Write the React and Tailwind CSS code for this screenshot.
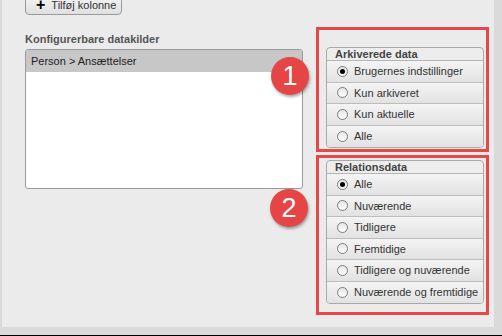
import React from 'react';

const archived = ['Brugernes indstillinger', 'Kun arkiveret', 'Kun aktuelle', 'Alle'];
const relations = ['Alle', 'Nuværende', 'Tidligere', 'Fremtidige', 'Tidligere og nuværende', 'Nuværende og fremtidige'];

function Radio({ checked }) {
  return (
    <span className="flex h-[11px] w-[11px] shrink-0 items-center justify-center rounded-full border border-[#7a7a7a] bg-gradient-to-b from-[#e6e6e6] to-white">
      {checked && <span className="h-[5px] w-[5px] rounded-full bg-black" />}
    </span>
  );
}

function Group({ title, options }) {
  return (
    <div className="overflow-hidden rounded-[4px] border border-[#a9a9a9] bg-[#ededed]">
      <div className="h-[13px] border-b border-[#b5b5b5] px-[8px] text-[11px] leading-[13px] font-bold whitespace-nowrap text-[#444]">
        {title}
      </div>
      {options.map((o, i) => (
        <div
          key={o}
          className="flex h-[21.5px] items-center gap-[6px] border-b border-[#bdbdbd] bg-gradient-to-b from-[#f4f4f4] to-[#e2e2e2] pl-[10px] text-[11px] whitespace-nowrap text-[#333] last:border-b-0"
        >
          <Radio checked={i === 0} />
          <span>{o}</span>
        </div>
      ))}
    </div>
  );
}

function Badge({ n }) {
  return (
    <div className="flex h-[38px] w-[38px] items-center justify-center rounded-full bg-[#e64545] text-[27px] leading-none text-white shadow-[1px_2px_3px_rgba(0,0,0,0.35)]">
      {n}
    </div>
  );
}

export default function App() {
  return (
    <div
      className="flex h-[336px] w-[502px] flex-col overflow-hidden bg-[#1a1a1a]"
      style={{ fontFamily: '"Liberation Sans", Arial, sans-serif' }}
    >
      <div className="flex min-h-0 flex-1 border-b border-black">
        <div className="flex flex-1 flex-col border-l-[2px] border-[#dadada] bg-[#ebebeb]">
          <div className="flex flex-1">
            <div className="flex w-[268px] shrink-0 flex-col pl-[23px]">
              <div className="-mt-[6px] flex h-[21px] w-[97px] items-end whitespace-nowrap rounded-b-[4px] border border-[#9a9a9a] bg-gradient-to-b from-[#f5f5f5] to-[#e0e0e0] pb-[2px] pl-[10px] text-[11px] text-[#333]">
                <span className="mr-[6px] text-[16px] leading-[14px] font-bold text-black">+</span>
                <span className="leading-[14px]">Tilføj kolonne</span>
              </div>
              <div className="mt-[18px] whitespace-nowrap text-[11px] leading-[13px] font-bold text-[#555]">Konfigurerbare datakilder</div>
              <div className="mt-[3px] h-[140px] w-[278px] overflow-hidden rounded-[3px] border border-[#9a9a9a] bg-white">
                <div className="h-[22px] bg-[#c7c7c7] pl-[5px] text-[11px] leading-[22px] whitespace-nowrap text-[#222]">Person &gt; Ansættelser</div>
              </div>
            </div>
            <div className="relative z-10 flex w-[46px] shrink-0 flex-col">
              <div className="mt-[57px] ml-[1px]"><Badge n="1" /></div>
              <div className="mt-[94px] ml-[0px]"><Badge n="2" /></div>
            </div>
            <div className="flex w-[173px] shrink-0 flex-col">
              <div className="mt-[27px] border-[3px] border-[#e54848] pt-[17px] pr-[2px] pb-[1px] pl-[7px]">
                <Group title="Arkiverede data" options={archived} />
              </div>
              <div className="mt-[3px] border-[3px] border-[#e54848] pt-[2px] pr-[2px] pb-[8px] pl-[7px]">
                <Group title="Relationsdata" options={relations} />
              </div>
            </div>
            <div className="flex-1" />
            <div className="w-[8px] bg-[#dadada]" />
          </div>
          <div className="h-[8px] bg-[#dadada]" />
        </div>
      </div>
    </div>
  );
}
